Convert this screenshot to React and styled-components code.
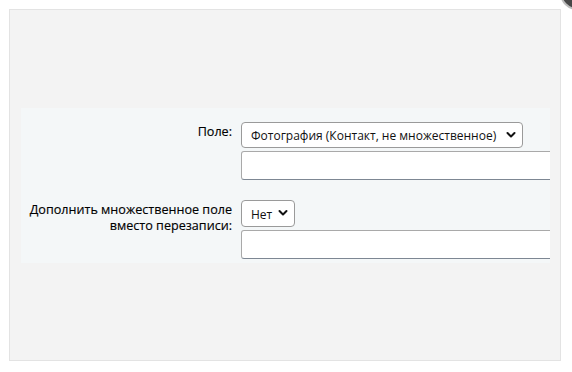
import React from "react"
import styled, { createGlobalStyle } from "styled-components"

const GlobalStyle = createGlobalStyle`
  html, body {
    margin: 0;
    padding: 0;
    background: #ffffff;
    font-family: "Open Sans", "Noto Sans", sans-serif;
  }
`

const Page = styled.div`
  position: relative;
  width: 572px;
  height: 372px;
  overflow: hidden;
  padding: 9px 0 0 9px;
  box-sizing: border-box;
`

const CloseDot = styled.div`
  position: absolute;
  top: -24px;
  right: -22px;
  width: 30px;
  height: 30px;
  border-radius: 50%;
  background: #474747;
  border: 2px solid #bdbdbd;
`

const Panel = styled.div`
  width: 552px;
  height: 352px;
  box-sizing: border-box;
  background: #f3f3f3;
  border: 1px solid #e3e3e3;
  padding: 98px 10px 0 11px;
`

const FormTable = styled.div`
  display: grid;
  grid-template-columns: 211px 1fr;
  column-gap: 9px;
  row-gap: 20px;
  padding: 14px 0 4px 0;
  background: #f4f7f8;
  overflow: hidden;
`

const Label = styled.div`
  text-align: right;
  font-size: 12.6px;
  line-height: 16px;
  color: #000;
  padding-top: 2px;
  -webkit-text-stroke: 0.15px #000;
`

const Controls = styled.div`
  display: flex;
  flex-direction: column;
  align-items: flex-start;
  gap: 3px;
  min-width: 0;
`

const SelectBox = styled.div`
  display: inline-flex;
  align-items: center;
  justify-content: space-between;
  box-sizing: border-box;
  width: ${p => p.$width}px;
  height: ${p => p.$height}px;
  padding: 1px 6px 0 9px;
  background: #ffffff;
  border: 1px solid #9a9a9a;
  border-radius: 4px;
  font-size: 12px;
  color: #111;
  white-space: nowrap;
`

const Chevron = styled.svg`
  width: 10px;
  height: 10px;
  flex: none;
  margin-top: -2px;
`

const TextInput = styled.div`
  box-sizing: border-box;
  width: 340px;
  height: 29px;
  background: #ffffff;
  border: 1px solid #a9a9a9;
  border-bottom-color: #7d8793;
  border-radius: 3px;
`

function Select({ value, width, height }) {
  return (
    <SelectBox $width={width} $height={height}>
      <span>{value}</span>
      <Chevron viewBox="0 0 10 10">
        <path d="M1.5 3 L5 6.5 L8.5 3" fill="none" stroke="#111" strokeWidth="2" strokeLinecap="round" strokeLinejoin="round" />
      </Chevron>
    </SelectBox>
  )
}

export default function App() {
  return (
    <>
      <GlobalStyle />
      <Page>
        <CloseDot />
        <Panel>
          <FormTable>
            <Label>Поле:</Label>
            <Controls>
              <Select value="Фотография (Контакт, не множественное)" width={282} height={26} />
              <TextInput />
            </Controls>

            <Label>Дополнить множественное поле<br />вместо перезаписи:</Label>
            <Controls>
              <Select value="Нет" width={54} height={27} />
              <TextInput />
            </Controls>
          </FormTable>
        </Panel>
      </Page>
    </>
  )
}
